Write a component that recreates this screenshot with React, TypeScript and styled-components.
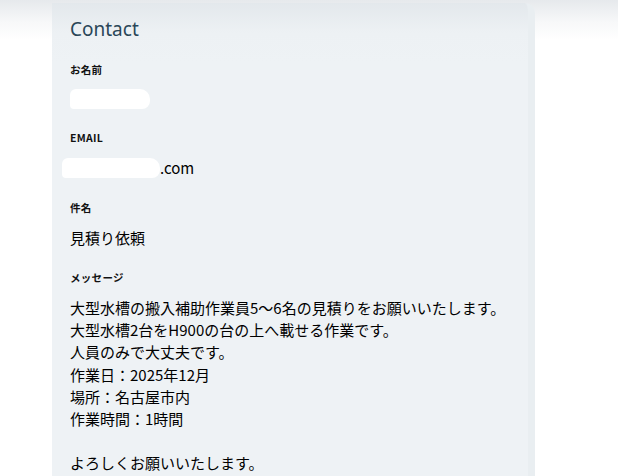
import styled, { createGlobalStyle } from 'styled-components';

const GlobalStyle = createGlobalStyle`
  html, body {
    margin: 0;
    padding: 0;
    height: 100%;
  }
  body {
    background: linear-gradient(180deg, #e6e9ec 0%, #f7f8f9 22px, #ffffff 40px);
    font-family: 'Noto Sans CJK JP', 'Noto Sans', sans-serif;
    overflow: hidden;
  }
`;

const Page = styled.div`
  padding: 3px 0 0 52px;
  height: 473px;
`;

const Card = styled.section`
  width: 483px;
  height: 100%;
  box-sizing: border-box;
  padding: 13px 0 0 18px;
  background: linear-gradient(180deg, #e3e8ec 0%, #edf1f4 30px, #eef2f5 60px);
  border-right: 7px solid #e9eef1;
  border-top-right-radius: 10px;
`;

const Title = styled.h2`
  margin: 0 0 21px;
  font-family: 'Noto Sans', sans-serif;
  font-size: 19px;
  font-weight: 400;
  color: #2a4658;
  line-height: 26px;
`;

const Field = styled.div`
  display: flex;
  flex-direction: column;
  margin-bottom: 22.5px;
`;

const Label = styled.div`
  font-size: 10.5px;
  font-weight: 700;
  color: #111;
  line-height: 14px;
  letter-spacing: 0.3px;
  margin-bottom: 11.5px;
`;

const Value = styled.div`
  font-size: 15px;
  color: #000;
  line-height: 22.2px;
  white-space: pre;
  display: flex;
  align-items: center;
`;

const Mask = styled.span<{ w: number }>`
  display: inline-block;
  width: ${({ w }) => w}px;
  height: 20px;
  background: #ffffff;
  border-radius: 6px 10px 8px 4px;
  filter: blur(0.6px);
`;

const message = `大型水槽の搬入補助作業員5〜6名の見積りをお願いいたします。
大型水槽2台をH900の台の上へ載せる作業です。
人員のみで大丈夫です。
作業日：2025年12月
場所：名古屋市内
作業時間：1時間

よろしくお願いいたします。`;

export default function App() {
  return (
    <>
      <GlobalStyle />
      <Page>
        <Card>
          <Title>Contact</Title>
          <Field>
            <Label>お名前</Label>
            <Value>
              <Mask w={80} />
            </Value>
          </Field>
          <Field>
            <Label>EMAIL</Label>
            <Value>
              <Mask w={98} style={{ marginLeft: -8 }} />
              .com
            </Value>
          </Field>
          <Field>
            <Label>件名</Label>
            <Value>見積り依頼</Value>
          </Field>
          <Field>
            <Label>メッセージ</Label>
            <Value>{message}</Value>
          </Field>
        </Card>
      </Page>
    </>
  );
}
